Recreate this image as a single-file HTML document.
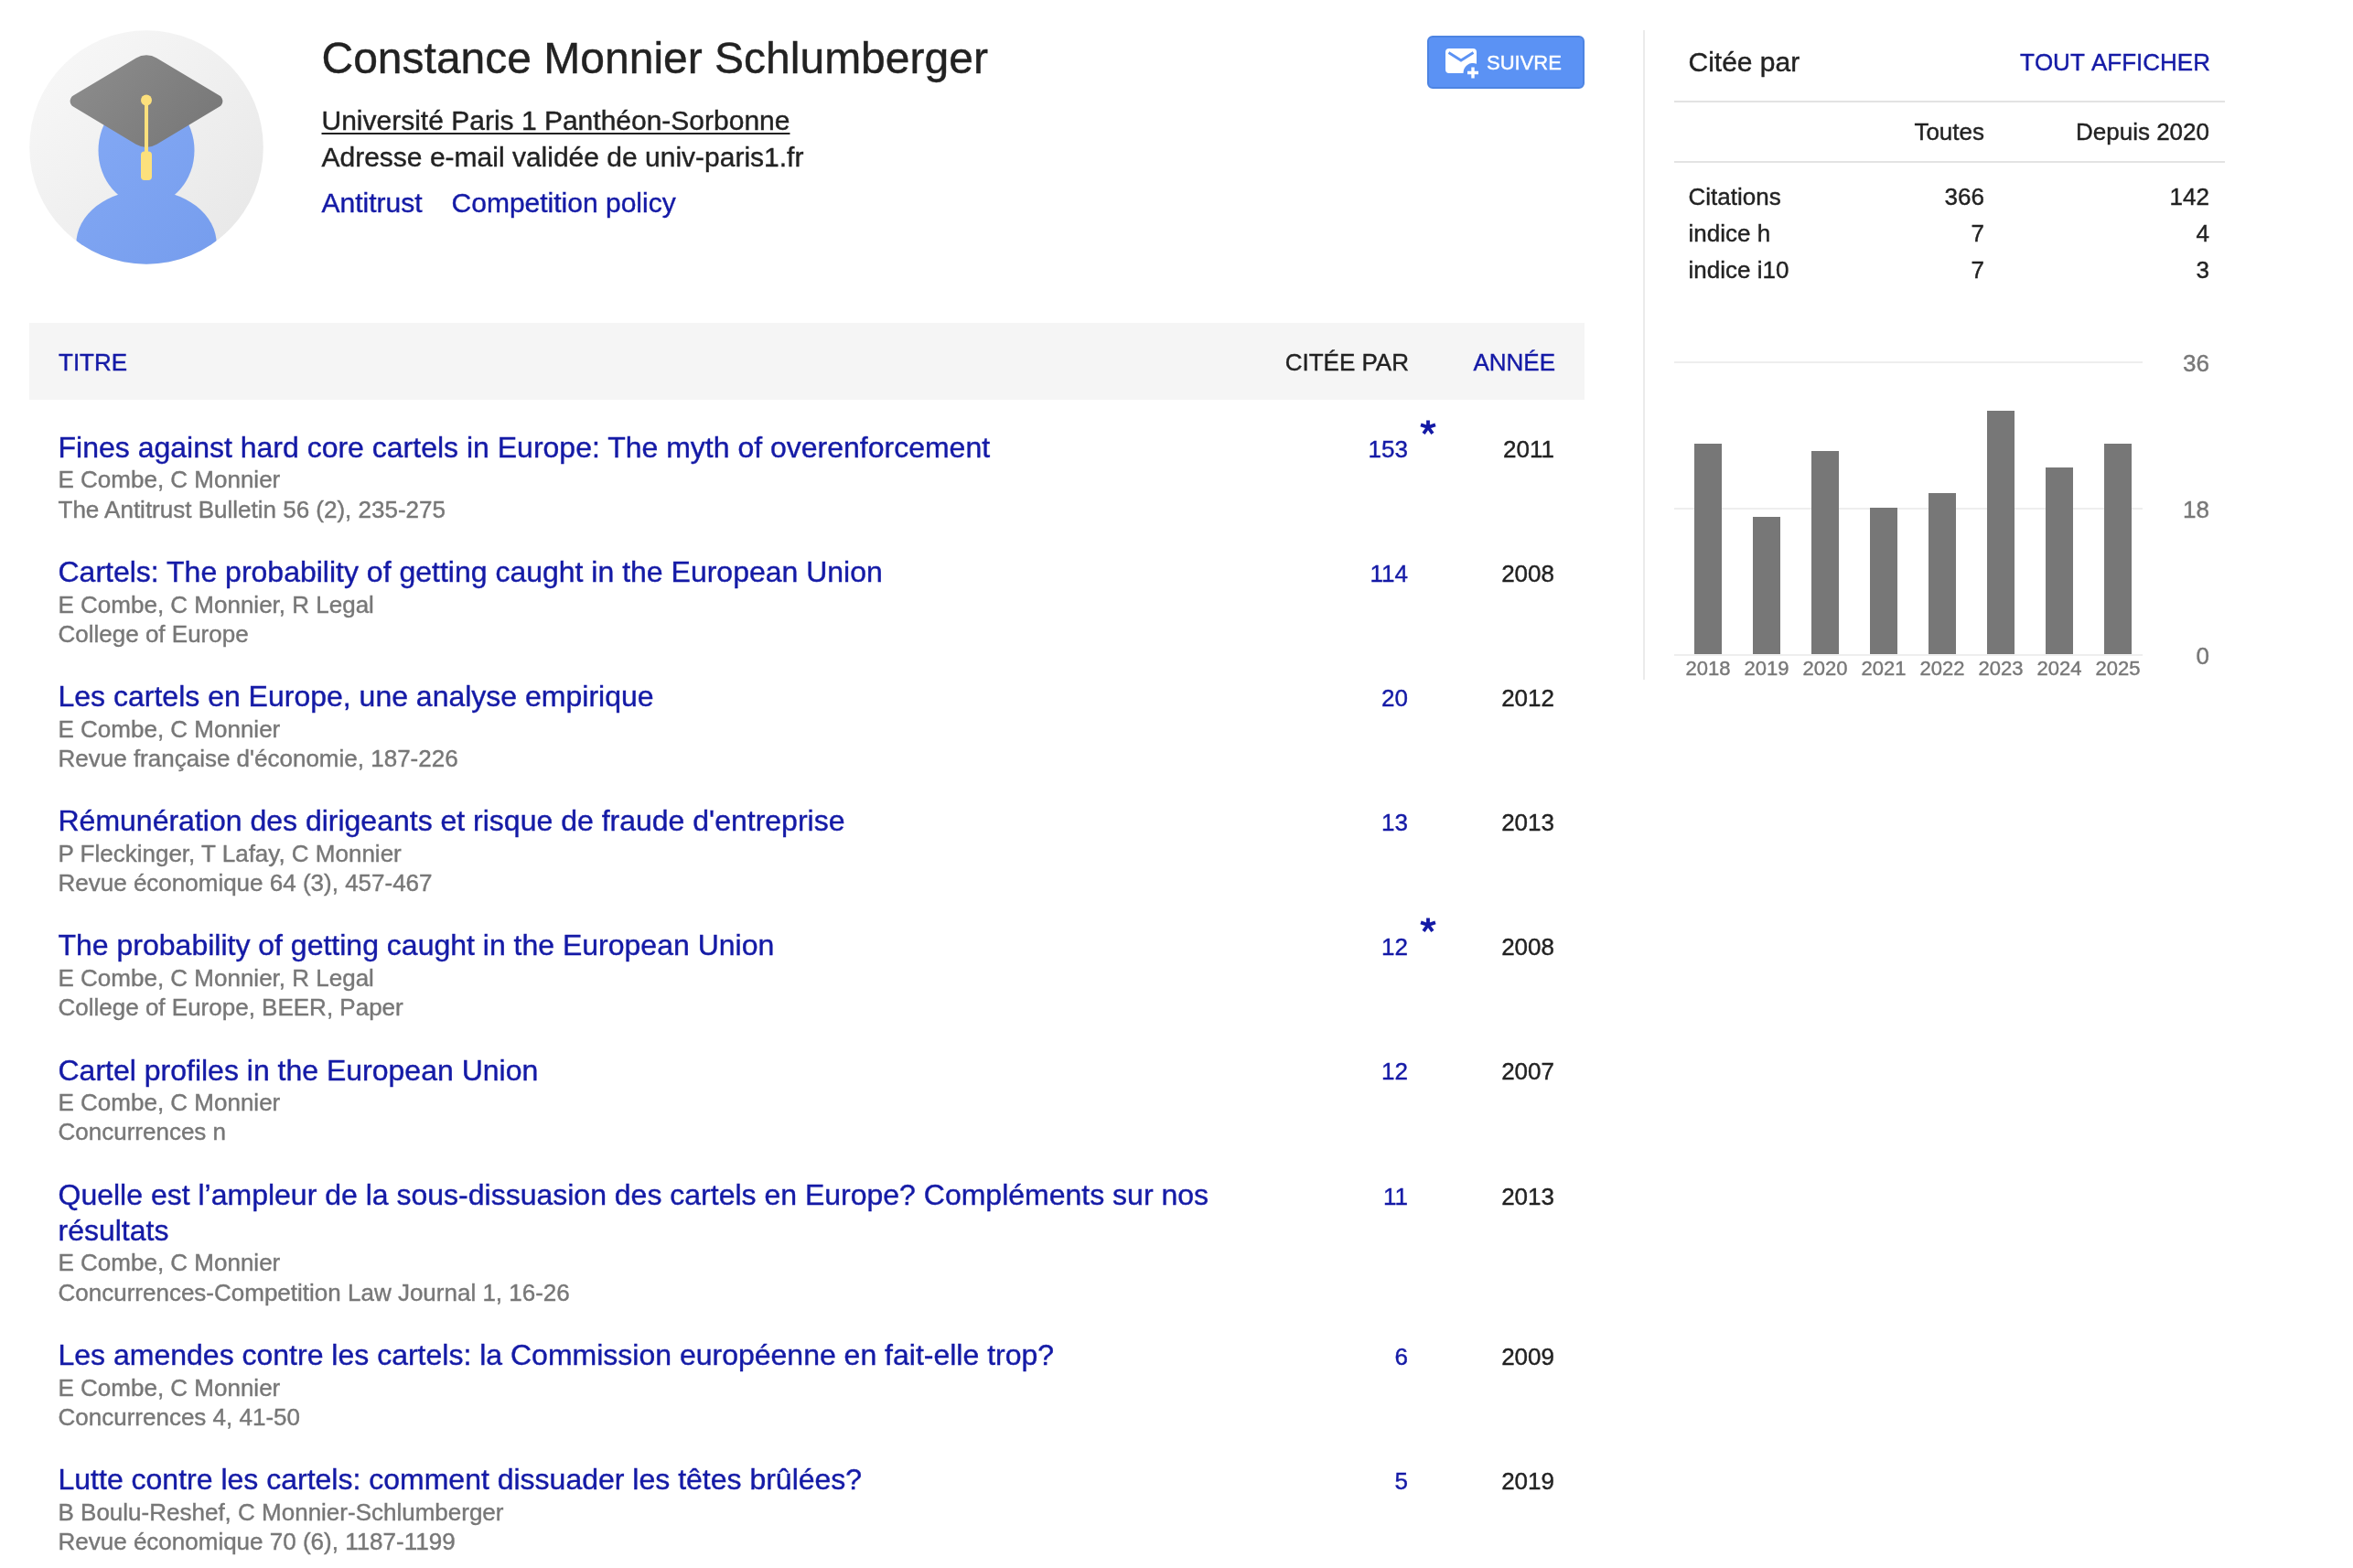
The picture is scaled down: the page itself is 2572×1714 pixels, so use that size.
<!DOCTYPE html>
<html lang="fr">
<head>
<meta charset="utf-8">
<title>Constance Monnier Schlumberger - Google Scholar</title>
<style>
html,body{margin:0;padding:0;background:#fff;}
html{width:2572px;height:1714px;overflow:hidden;}
body{width:2572px;height:1714px;overflow:hidden;position:relative;font-family:"Liberation Sans",sans-serif;font-size:26px;line-height:32.24px;color:#222;}
a{color:#141aa6;text-decoration:none;}
#pg{position:absolute;left:0;top:0;width:2572px;height:1714px;overflow:hidden;will-change:transform;-webkit-text-stroke:0.4px;}
.abs{position:absolute;}
/* ---------- profile ---------- */
#avatar{left:32px;top:33px;width:256px;height:256px;}
#name{left:351.5px;top:34px;font-size:48px;line-height:60px;color:#222;white-space:nowrap;}
.il{left:351.5px;font-size:30px;line-height:36px;white-space:nowrap;color:#222;}
#aff{top:114px;}
#aff a{color:#222;text-decoration:underline;text-decoration-thickness:2px;text-underline-offset:3px;}
#mail{top:154px;}
#int{top:204px;}
#int a{margin-right:32px;}
/* ---------- follow button ---------- */
#follow{left:1560px;top:39px;width:172px;height:58px;box-sizing:border-box;background:#5b92f4;border:2px solid #4d84e2;border-radius:6px;}
#follow svg{position:absolute;left:16px;top:10px;}
#follow span{position:absolute;left:63px;top:12px;font-size:22px;line-height:32px;color:#fff;white-space:nowrap;}
/* ---------- table ---------- */
#thead{left:32px;top:353px;width:1700px;height:84px;background:#f5f5f5;}
#thead div{position:absolute;top:27px;font-size:26px;line-height:32px;white-space:nowrap;}
#rows{left:32px;top:452.7px;width:1700px;}
.row{position:relative;padding:16px 0 16px 31.5px;}
.row .t{display:block;position:relative;top:1px;font-size:32px;line-height:39.2px;padding:0.24px 0;width:1276px;}
.row .g{color:#777;font-size:26px;line-height:32.24px;white-space:nowrap;}
.row .c{position:absolute;right:193px;top:22px;font-size:26px;line-height:32.24px;}
.row .y{position:absolute;right:33px;top:22px;font-size:26px;line-height:32.24px;color:#222;}
.row .s{position:absolute;left:1519px;top:4px;width:20px;height:20px;}
/* ---------- side panel ---------- */
#vline{left:1796px;top:33px;width:2px;height:710px;background:#ebebeb;}
#cby{left:1845.5px;top:49px;font-size:30px;line-height:38px;color:#222;}
#viewall{right:156px;top:52px;font-size:26px;line-height:32px;font-kerning:none;}
.hl{left:1830px;width:602px;height:2px;background:#e3e3e3;}
.st{font-size:26px;line-height:32px;white-space:nowrap;color:#222;}
.r1{right:403px;text-align:right;}
.r2{right:157px;text-align:right;}
/* chart */
.gl{left:1830px;width:512px;height:2px;background:#eee;}
.bar{width:30px;background:#777;}
.xl{width:64px;text-align:center;font-size:22px;line-height:26px;color:#777;top:718px;}
.yl{right:157px;text-align:right;font-size:26px;line-height:32px;color:#777;}
</style>
</head>
<body>
<div id="pg">

<!-- avatar -->
<svg id="avatar" class="abs" viewBox="0 0 256 256" width="256" height="256">
  <defs>
    <linearGradient id="gbg" x1="0.150" y1="0.150" x2="0.850" y2="0.850"><stop offset="0" stop-color="#f6f6f6"/><stop offset="1" stop-color="#e9e9e9"/></linearGradient>
    <linearGradient id="gbl" gradientUnits="userSpaceOnUse" x1="40" y1="40" x2="216" y2="216"><stop offset="0" stop-color="#86abf6"/><stop offset="1" stop-color="#779eee"/></linearGradient>
    <linearGradient id="gcap" gradientUnits="userSpaceOnUse" x1="60" y1="20" x2="196" y2="136"><stop offset="0" stop-color="#8d8d8d"/><stop offset="1" stop-color="#767676"/></linearGradient>
    <clipPath id="cc"><circle cx="128" cy="128" r="127.800"/></clipPath>
  </defs>
  <circle cx="128" cy="128" r="127.800" fill="url(#gbg)"/>
  <g clip-path="url(#cc)">
    <ellipse cx="128" cy="131.400" rx="52.500" ry="60" fill="url(#gbl)"/>
    <ellipse cx="128" cy="234.100" rx="76.800" ry="59.400" fill="url(#gbl)"/>
  </g>
  <path d="M48 71.600 L116.680 30.390 A22 22 0 0 1 139.320 30.390 L208 71.600 A7 7 0 0 1 208 83.600 L139.320 124.810 A22 22 0 0 1 116.680 124.810 L48 83.600 A7 7 0 0 1 48 71.600 Z" fill="url(#gcap)"/>
  <circle cx="128" cy="76.500" r="6" fill="#fce07c"/>
  <rect x="126" y="77" width="4" height="57" fill="#fce07c"/>
  <rect x="122" y="132.600" width="12" height="31.500" rx="4" fill="#fce07c"/>
</svg>

<div id="name" class="abs">Constance Monnier Schlumberger</div>
<div id="aff" class="abs il"><a>Université Paris 1 Panthéon-Sorbonne</a></div>
<div id="mail" class="abs il">Adresse e-mail validée de univ-paris1.fr</div>
<div id="int" class="abs il"><a>Antitrust</a><a>Competition policy</a></div>

<div id="follow" class="abs">
  <svg width="42" height="36" viewBox="0 0 42 36">
    <path d="M6 2 H32 Q36 2 36 6 V18.800 A10.500 10.500 0 0 0 21.500 29 H6 Q2 29 2 25 V6 Q2 2 6 2 Z" fill="#fff"/>
    <path d="M5.500 6.500 L19 15 L32.500 6.500" fill="none" stroke="#5b92f4" stroke-width="2.800"/>
    <path d="M32 22.500 V34.500 M26 28.500 H38" fill="none" stroke="#fff" stroke-width="3.400"/>
  </svg>
  <span>SUIVRE</span>
</div>

<!-- table header -->
<div id="thead" class="abs">
  <div style="left:32px;color:#141aa6;">TITRE</div>
  <div style="right:192px;color:#222;">CITÉE PAR</div>
  <div style="right:32px;color:#141aa6;">ANNÉE</div>
</div>

<div id="rows" class="abs">
  <div class="row"><a class="t">Fines against hard core cartels in Europe: The myth of overenforcement</a><div class="g">E Combe, C Monnier</div><div class="g">The Antitrust Bulletin 56 (2), 235-275</div><a class="c">153</a><svg class="s" viewBox="-10 -10 20 20"><path d="M0 0L0 -7.600M0 0L7.990 -2.600M0 0L-7.990 -2.600M0 0L4.940 6.800M0 0L-4.940 6.800" stroke="#141aa6" stroke-width="3.800" fill="none"/></svg><span class="y">2011</span></div>
  <div class="row"><a class="t">Cartels: The probability of getting caught in the European Union</a><div class="g">E Combe, C Monnier, R Legal</div><div class="g">College of Europe</div><a class="c">114</a><span class="y">2008</span></div>
  <div class="row"><a class="t">Les cartels en Europe, une analyse empirique</a><div class="g">E Combe, C Monnier</div><div class="g">Revue française d'économie, 187-226</div><a class="c">20</a><span class="y">2012</span></div>
  <div class="row"><a class="t">Rémunération des dirigeants et risque de fraude d'entreprise</a><div class="g">P Fleckinger, T Lafay, C Monnier</div><div class="g">Revue économique 64 (3), 457-467</div><a class="c">13</a><span class="y">2013</span></div>
  <div class="row"><a class="t">The probability of getting caught in the European Union</a><div class="g">E Combe, C Monnier, R Legal</div><div class="g">College of Europe, BEER, Paper</div><a class="c">12</a><svg class="s" viewBox="-10 -10 20 20"><path d="M0 0L0 -7.600M0 0L7.990 -2.600M0 0L-7.990 -2.600M0 0L4.940 6.800M0 0L-4.940 6.800" stroke="#141aa6" stroke-width="3.800" fill="none"/></svg><span class="y">2008</span></div>
  <div class="row"><a class="t">Cartel profiles in the European Union</a><div class="g">E Combe, C Monnier</div><div class="g">Concurrences n</div><a class="c">12</a><span class="y">2007</span></div>
  <div class="row"><a class="t">Quelle est l’ampleur de la sous-dissuasion des cartels en Europe? Compléments sur nos résultats</a><div class="g">E Combe, C Monnier</div><div class="g">Concurrences-Competition Law Journal 1, 16-26</div><a class="c">11</a><span class="y">2013</span></div>
  <div class="row"><a class="t">Les amendes contre les cartels: la Commission européenne en fait-elle trop?</a><div class="g">E Combe, C Monnier</div><div class="g">Concurrences 4, 41-50</div><a class="c">6</a><span class="y">2009</span></div>
  <div class="row"><a class="t">Lutte contre les cartels: comment dissuader les têtes brûlées?</a><div class="g">B Boulu-Reshef, C Monnier-Schlumberger</div><div class="g">Revue économique 70 (6), 1187-1199</div><a class="c">5</a><span class="y">2019</span></div>
</div>

<!-- side panel -->
<div id="vline" class="abs"></div>
<div id="cby" class="abs">Citée par</div>
<a id="viewall" class="abs">TOUT AFFICHER</a>
<div class="abs hl" style="top:110px;"></div>
<div class="abs st r1" style="top:128px;">Toutes</div>
<div class="abs st r2" style="top:128px;">Depuis 2020</div>
<div class="abs hl" style="top:176px;"></div>
<div class="abs st" style="left:1845.5px;top:199px;">Citations</div><div class="abs st r1" style="top:199px;">366</div><div class="abs st r2" style="top:199px;">142</div>
<div class="abs st" style="left:1845.5px;top:239px;">indice h</div><div class="abs st r1" style="top:239px;">7</div><div class="abs st r2" style="top:239px;">4</div>
<div class="abs st" style="left:1845.5px;top:279px;">indice i10</div><div class="abs st r1" style="top:279px;">7</div><div class="abs st r2" style="top:279px;">3</div>

<!-- chart -->
<div class="abs gl" style="top:395px;"></div>
<div class="abs gl" style="top:555px;"></div>
<div class="abs gl" style="top:715px;"></div>
<div class="abs yl" style="top:381px;">36</div>
<div class="abs yl" style="top:541px;">18</div>
<div class="abs yl" style="top:701px;">0</div>
<div class="abs bar" style="left:1852px;top:485px;height:230px;"></div>
<div class="abs bar" style="left:1916px;top:565px;height:150px;"></div>
<div class="abs bar" style="left:1980px;top:493px;height:222px;"></div>
<div class="abs bar" style="left:2044px;top:555px;height:160px;"></div>
<div class="abs bar" style="left:2108px;top:539px;height:176px;"></div>
<div class="abs bar" style="left:2172px;top:449px;height:266px;"></div>
<div class="abs bar" style="left:2236px;top:511px;height:204px;"></div>
<div class="abs bar" style="left:2300px;top:485px;height:230px;"></div>
<div class="abs xl" style="left:1835px;">2018</div>
<div class="abs xl" style="left:1899px;">2019</div>
<div class="abs xl" style="left:1963px;">2020</div>
<div class="abs xl" style="left:2027px;">2021</div>
<div class="abs xl" style="left:2091px;">2022</div>
<div class="abs xl" style="left:2155px;">2023</div>
<div class="abs xl" style="left:2219px;">2024</div>
<div class="abs xl" style="left:2283px;">2025</div>

</div>
</body>
</html>
